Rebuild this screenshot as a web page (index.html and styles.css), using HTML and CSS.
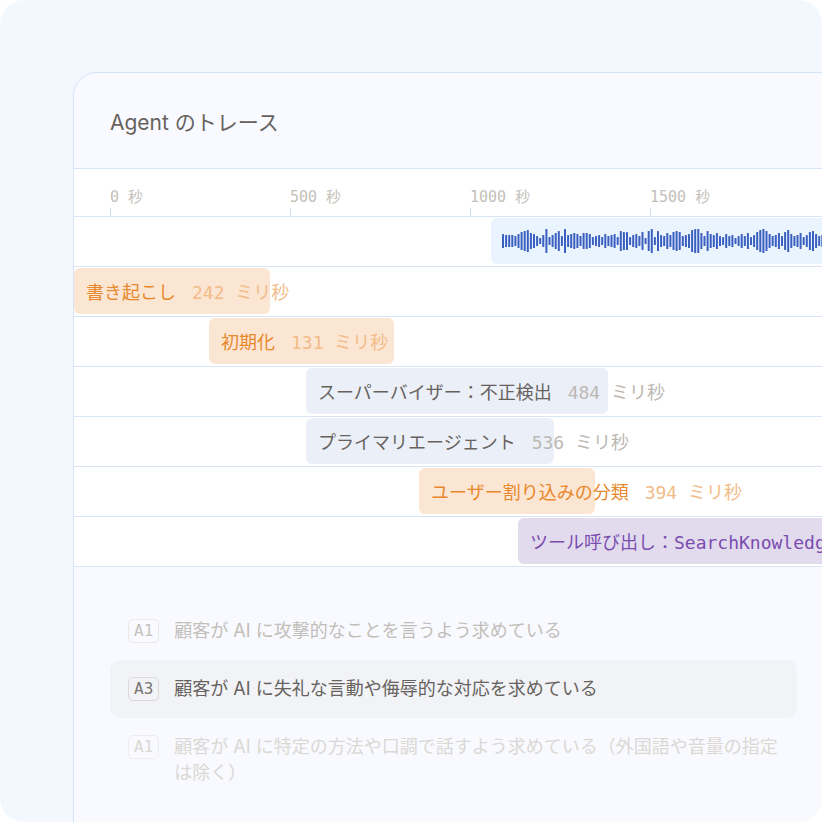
FILE: index.html
```html
<!DOCTYPE html>
<html lang="ja">
<head>
    <meta charset="UTF-8">
    <meta name="viewport" content="width=device-width, initial-scale=1.0">
    <title>Agent のトレース</title>
    <link rel="stylesheet" href="styles.css">
</head>
<body>
    <div class="frame">
        <div class="card">
            <div class="card-head">Agent のトレース</div>
            <div class="timeline">
                <div class="axis">
                    <span class="tick">0 秒</span>
                    <span class="tick">500 秒</span>
                    <span class="tick">1000 秒</span>
                    <span class="tick">1500 秒</span>
                </div>
                <div class="row">
                    <div class="bar audio" style="margin-left: 417px; width: 600px;">
                        <svg id="wave" width="600" height="46"></svg>
                    </div>
                </div>
                <div class="row">
                    <div class="bar orange" style="margin-left: 0; width: 196px;">
                        <span class="name">書き起こし</span><span class="ms">242 ミリ秒</span>
                    </div>
                </div>
                <div class="row">
                    <div class="bar orange" style="margin-left: 135px; width: 185px;">
                        <span class="name">初期化</span><span class="ms">131 ミリ秒</span>
                    </div>
                </div>
                <div class="row">
                    <div class="bar gray" style="margin-left: 232px; width: 302px;">
                        <span class="name">スーパーバイザー：不正検出</span><span class="ms">484 ミリ秒</span>
                    </div>
                </div>
                <div class="row">
                    <div class="bar gray" style="margin-left: 232px; width: 248px;">
                        <span class="name">プライマリエージェント</span><span class="ms">536 ミリ秒</span>
                    </div>
                </div>
                <div class="row">
                    <div class="bar orange" style="margin-left: 345px; width: 176px;">
                        <span class="name">ユーザー割り込みの分類</span><span class="ms">394 ミリ秒</span>
                    </div>
                </div>
                <div class="row">
                    <div class="bar purple" style="margin-left: 444px; width: 500px;">
                        <span class="name">ツール呼び出し：<span class="mono">SearchKnowledge</span></span>
                    </div>
                </div>
            </div>
            <div class="intents">
                <div class="intent faint">
                    <span class="code">A1</span>
                    <span class="text">顧客が AI に攻撃的なことを言うよう求めている</span>
                </div>
                <div class="intent active">
                    <span class="code">A3</span>
                    <span class="text">顧客が AI に失礼な言動や侮辱的な対応を求めている</span>
                </div>
                <div class="intent fainter">
                    <span class="code">A1</span>
                    <span class="text">顧客が AI に特定の方法や口調で話すよう求めている（外国語や音量の指定は除く）</span>
                </div>
            </div>
        </div>
    </div>
    <script>
        // audio amplitude samples for the waveform strip
        var heights = [14,12,12,12,10,14,18,20,22,16,14,10,6,12,24,8,12,16,20,10,
                       24,12,14,16,14,10,16,16,14,8,10,12,8,14,10,12,14,8,20,18,
                       18,8,12,14,10,18,6,20,24,8,20,12,10,16,12,18,20,18,10,12,
                       14,22,24,24,16,10,20,14,12,16,10,8,14,10,12,6,10,14,10,16,
                       8,12,18,22,24,20,14,10,12,16,10,18,22,14,10,12,16,8,12,18,
                       20,14,10,12];
        var wave = document.getElementById("wave");
        var out = "";
        for (var i = 0; i < heights.length; i++) {
            var h = heights[i];
            out += '<rect x="' + (11 + i * 3.1).toFixed(1) + '" y="' + (23 - h / 2) +
                   '" width="2" height="' + h + '" rx="0.6"/>';
        }
        wave.innerHTML = out;
    </script>
</body>
</html>
```

FILE: styles.css
```css
*{
    margin: 0;
    padding: 0;
    box-sizing: border-box;
}
body{
    background: #fff;
    font-family: "Inter", "Noto Sans CJK JP", sans-serif;
}
.frame{
    width: 822px;
    height: 822px;
    padding: 72px 0 0 73px;
    border-radius: 24px;
    background: #f3f8fe;
    overflow: hidden;
}
.card{
    width: 1000px;
    height: 900px;
    border: 1px solid #d6e4f5;
    border-radius: 24px 0 0 0;
    background: #f8faff;
}
.card-head{
    padding: 37px 36px 32px;
    font-size: 21px;
    line-height: 26px;
    font-weight: 400;
    color: #67625e;
    border-bottom: 1px solid #d6e4f5;
}

/* timeline */
.timeline{
    background: #fff;
}
.axis{
    display: flex;
    height: 48px;
    padding: 18px 0 0 36px;
    border-bottom: 1px solid #d9e5f4;
}
.tick{
    position: relative;
    width: 180px;
    flex: none;
    font-family: "DejaVu Sans Mono", "Noto Sans CJK JP", monospace;
    font-size: 15px;
    line-height: 20px;
    color: #c4bfb9;
}
.tick::after{
    content: "";
    position: absolute;
    left: 0;
    top: 21px;
    width: 1px;
    height: 9px;
    background: #d3e0f0;
}
.row{
    display: flex;
    height: 50px;
    padding: 1px 0 2px;
    border-bottom: 1px solid #d9e5f4;
}
.bar{
    flex: none;
    display: flex;
    align-items: center;
    padding-left: 12px;
    border-radius: 6px;
    white-space: nowrap;
    font-size: 18px;
}
.bar .ms{
    margin-left: 16px;
    font-family: "DejaVu Sans Mono", "Noto Sans CJK JP", monospace;
    font-size: 18px;
}
.mono{
    font-family: "DejaVu Sans Mono", "Noto Sans CJK JP", monospace;
}
.audio{
    padding-left: 0;
    background: #eaf4fe;
}
.audio svg{
    display: block;
    fill: #3a5fbf;
}
.orange{
    background: #fbe6d3;
    color: #e8882c;
}
.orange .ms{
    color: #f3bb88;
}
.gray{
    background: #ebf0f8;
    color: #67625e;
}
.gray .ms{
    color: #bdb8b3;
}
.purple{
    background: #e2dbee;
    color: #7a4caf;
}

/* intent list */
.intents{
    display: flex;
    flex-direction: column;
    width: 723px;
    padding: 35px 0 0 36px;
}
.intent{
    display: flex;
    gap: 15px;
    padding: 16px 18px;
    border-radius: 10px;
    font-size: 18px;
    line-height: 26px;
}
.code{
    flex: none;
    height: 24px;
    margin-top: 1px;
    padding: 0 5px;
    border: 1px solid #ebe8e5;
    border-radius: 5px;
    font-family: "DejaVu Sans Mono", monospace;
    font-size: 16px;
    line-height: 22px;
}
.faint{
    color: #c3beb9;
}
.faint .code{
    color: #c6c1bc;
}
.active{
    background: #f1f3f7;
    color: #67625e;
}
.active .code{
    color: #7a7570;
    border-color: #dcdad8;
}
.fainter{
    color: #dcd8d4;
}
.fainter .code{
    border-color: #efedeb;
}
```
